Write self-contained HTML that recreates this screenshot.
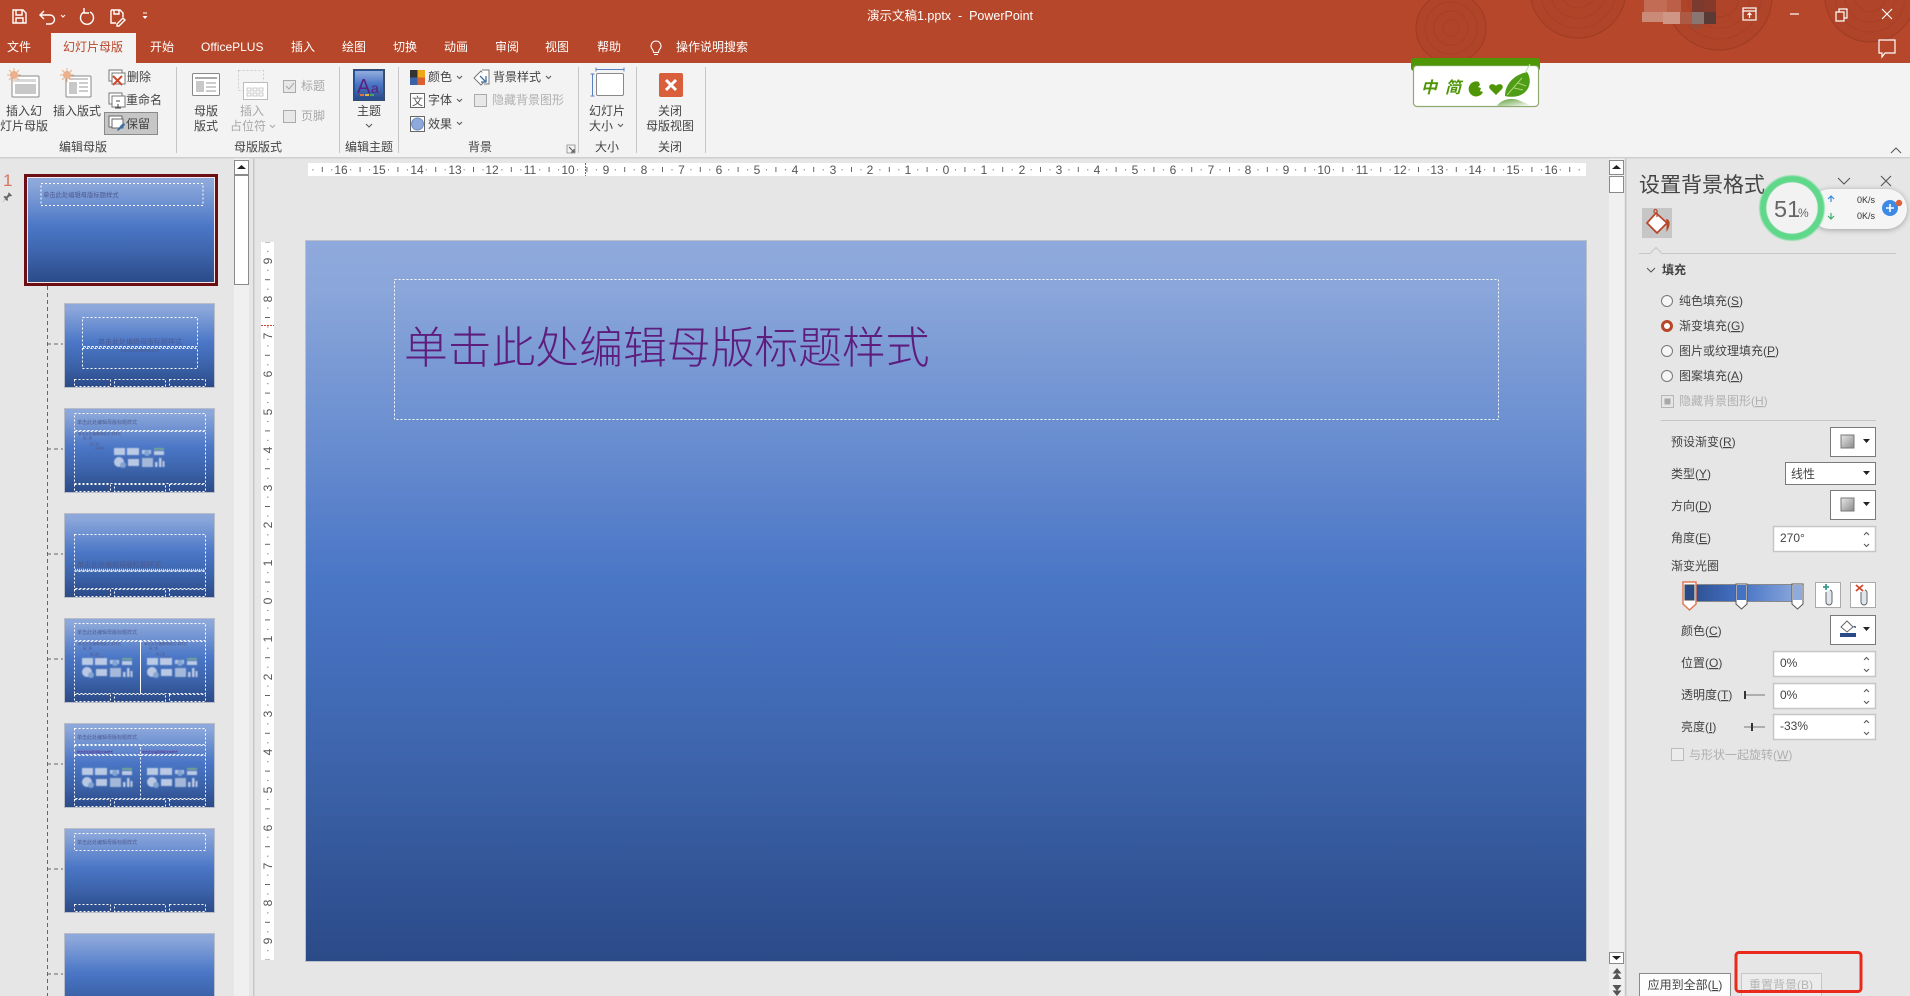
<!DOCTYPE html>
<html lang="zh-CN"><head><meta charset="utf-8"><title>演示文稿1.pptx - PowerPoint</title>
<style>
html,body{margin:0;padding:0;background:#e6e6e6;overflow:hidden;width:1910px;height:996px}
svg{display:block}
text{font-family:"Liberation Sans","Noto Sans CJK SC",sans-serif}
.r{font-size:12px;fill:#444}
.c{text-anchor:middle}
.g{fill:#a8a8a8}
.w{fill:#fff;font-size:12px}
.box{fill:none;stroke:#fff;stroke-width:1;stroke-dasharray:2 2;shape-rendering:crispEdges}
.btn{fill:#fff;stroke:#7a7a7a;stroke-width:1}
.inp{fill:#fff;stroke:#c6c6c6;stroke-width:1.5}
.ic{fill:none;stroke:#666;stroke-width:1}
.tt{font-size:5px;fill:#4d5a8e}
.chev{fill:none;stroke:#555;stroke-width:1}
.u{text-decoration:underline}
</style></head>
<body>
<svg width="1910" height="996" viewBox="0 0 1910 996" xmlns="http://www.w3.org/2000/svg">
<defs>
<linearGradient id="sg" x1="0" y1="0" x2="0" y2="1">
<stop offset="0" stop-color="#8fa9dc"/><stop offset=".07" stop-color="#8aa6da"/><stop offset=".47" stop-color="#4a76c6"/><stop offset=".7" stop-color="#3e66ae"/><stop offset="1" stop-color="#2b4a88"/>
</linearGradient>
<linearGradient id="bar" x1="0" y1="0" x2="1" y2="0">
<stop offset="0" stop-color="#2b4a88"/><stop offset=".48" stop-color="#4472c4"/><stop offset="1" stop-color="#8faadc"/>
</linearGradient>
<linearGradient id="sw" x1="0" y1="0" x2="1" y2="1">
<stop offset="0" stop-color="#e8e8e8"/><stop offset="1" stop-color="#8a8a8a"/>
</linearGradient>
<linearGradient id="rf" x1="0" y1="0" x2="1" y2="1">
<stop offset="0" stop-color="#3f8a10"/><stop offset="1" stop-color="#ffffff"/>
</linearGradient>
<filter id="bl" x="-10%" y="-10%" width="120%" height="120%"><feGaussianBlur stdDeviation=".45"/></filter>
<filter id="bl2" x="-10%" y="-10%" width="120%" height="120%"><feGaussianBlur stdDeviation=".8"/></filter>
<pattern id="hr" patternUnits="userSpaceOnUse" width="37.8" height="13" x="946" y="163">
<rect x="18.4" y="4" width="1" height="5" fill="#666"/><rect x="9" y="6" width="1" height="1.5" fill="#888"/><rect x="27.9" y="6" width="1" height="1.5" fill="#888"/>
</pattern>
<pattern id="vr" patternUnits="userSpaceOnUse" width="13" height="37.8" x="261" y="601">
<rect x="4" y="18.4" width="5" height="1" fill="#666"/><rect x="6" y="9" width="1.5" height="1" fill="#888"/><rect x="6" y="27.9" width="1.5" height="1" fill="#888"/>
</pattern>
<clipPath id="tb"><rect x="0" y="0" width="1910" height="63"/></clipPath>
<g id="ico" opacity=".85" filter="url(#bl)">
<rect x="0" y="0" width="11" height="7" fill="#d0daec"/><rect x="13" y="0" width="12" height="7" fill="#d0daec"/><rect x="28" y="2" width="9" height="4" fill="#d0daec"/><circle cx="33" cy="5" r="3" fill="#8fb0d8"/><rect x="40" y="0" width="10" height="2" fill="#7fb08a"/><rect x="40" y="3" width="10" height="4" fill="#d0daec"/>
<circle cx="5" cy="14" r="5" fill="#d0daec"/><circle cx="9" cy="17" r="3" fill="#8fb0d8"/><rect x="14" y="11" width="11" height="7" fill="#d0daec"/><rect x="28" y="10" width="11" height="9" fill="#b6c6e0"/><rect x="41" y="14" width="2.5" height="5" fill="#d0daec"/><rect x="45" y="10" width="2.5" height="9" fill="#d0daec"/><rect x="48.5" y="13" width="2" height="6" fill="#d0daec"/>
</g>
<g id="body">
<text class="tt" x="0" y="0" style="font-size:3.6px">单击此处编辑母版文本样式</text>
<text class="tt" x="5" y="4" style="font-size:3px">第二级</text>
<text class="tt" x="12" y="10" style="font-size:3px">第三级</text>
<text class="tt" x="17" y="14" style="font-size:3px">第四级</text>
</g>
<g id="foot">
<rect class="box" x="74.5" width="36" height="7"/><rect class="box" x="114.5" width="51" height="7"/><rect class="box" x="169.5" width="36" height="7"/>
</g>
</defs>

<!-- title + tab bar -->
<rect x="0" y="0" width="1910" height="63" fill="#b7472a"/>
<g clip-path="url(#tb)">
<g fill="#af4429" stroke="#a84027" stroke-width="1.2">
<circle cx="1451" cy="28" r="35" stroke="#a03d25"/><circle cx="1451" cy="28" r="26" fill="none"/><circle cx="1451" cy="28" r="17" fill="none"/><circle cx="1451" cy="28" r="8" fill="none"/>
<circle cx="1578" cy="-10" r="48" stroke="#a03d25"/><circle cx="1578" cy="-10" r="38" fill="none"/><circle cx="1578" cy="-10" r="28" fill="none"/><circle cx="1578" cy="-10" r="18" fill="none"/>
<circle cx="1719" cy="-3" r="53" stroke="#a03d25"/><circle cx="1719" cy="-3" r="42" fill="none"/><circle cx="1719" cy="-3" r="31" fill="none"/><circle cx="1719" cy="-3" r="20" fill="none"/>
<circle cx="1870" cy="-3" r="45" stroke="#a03d25"/><circle cx="1870" cy="-3" r="35" fill="none"/><circle cx="1870" cy="-3" r="25" fill="none"/><circle cx="1870" cy="-3" r="15" fill="none"/>
</g>
</g>
<!-- mosaic -->
<rect x="1644" y="0" width="23" height="12" fill="#c26b55"/><rect x="1667" y="0" width="14" height="12" fill="#bb5f49"/><rect x="1692" y="0" width="12" height="12" fill="#7a3a30"/><rect x="1704" y="0" width="12" height="12" fill="#84392a"/>
<rect x="1642" y="12" width="25" height="10" fill="#c98a78"/><rect x="1663" y="12" width="17" height="12" fill="#cf9585"/><rect x="1680" y="12" width="12" height="12" fill="#ad5a45"/><rect x="1692" y="12" width="12" height="12" fill="#8a7570"/><rect x="1704" y="12" width="12" height="12" fill="#5a3a35"/><rect x="1692" y="24" width="9" height="5" fill="#9a4a35"/>

<!-- quick access -->
<g fill="none" stroke="#fff" stroke-width="1.4">
<path d="M13 10h10l3 3v10H13z"/><path d="M16 10v5h6v-5M16 23v-5h7v5"/>
<path d="M41 15h9a4.5 4.5 0 0 1 0 9h-4M44 11l-4 4 4 4"/>
<path d="M61 15l2 2 2-2" stroke-width="1"/>
<path d="M90 12a6.500 6.500 0 1 1-6 0M84 8v5h5" />
<path d="M111 10h9l3 3v4M111 10v13h5"/><path d="M114 10v4h5v-4M117 24l6-6 2 2-6 6h-2z"/>
<path d="M143 13h4" stroke-width="1"/><path d="M142.500 16h5l-2.500 3z" fill="#fff" stroke="none"/>
</g>

<text x="950" y="20" class="w c" style="font-size:12.500px">演示文稿1.pptx&#160;&#160;-&#160;&#160;PowerPoint</text>

<!-- window controls -->
<g fill="none" stroke="#fff" stroke-width="1.200">
<rect x="1743" y="8" width="13" height="12"/><path d="M1743 11h13M1749.500 18v-5M1747.500 15l2-2 2 2"/>
<path d="M1790 14h9"/>
<path d="M1836 12h8v9h-8zM1839 12V9h8v9h-3"/>
<path d="M1882 9l10 10M1892 9l-10 10"/>
<path d="M1879 40h16v13h-10l-3 4v-4h-3z"/>
</g>

<!-- tabs -->
<rect x="0" y="63" width="1910" height="94" fill="#f3f3f3"/>
<rect x="51" y="33" width="85" height="30" fill="#f3f3f3"/>
<g class="w">
<text class="w" x="7" y="51">文件</text>
<text x="63" y="51" style="font-size:12px;fill:#b7472a">幻灯片母版</text>
<text class="w" x="150" y="51">开始</text>
<text class="w" x="201" y="51">OfficePLUS</text>
<text class="w" x="291" y="51">插入</text>
<text class="w" x="342" y="51">绘图</text>
<text class="w" x="393" y="51">切换</text>
<text class="w" x="444" y="51">动画</text>
<text class="w" x="495" y="51">审阅</text>
<text class="w" x="545" y="51">视图</text>
<text class="w" x="597" y="51">帮助</text>
<text class="w" x="676" y="51">操作说明搜索</text>
</g>
<path d="M656 41a5 5 0 0 1 3.500 8.500c-1 1-1 2-1 3h-5c0-1 0-2-1-3A5 5 0 0 1 656 41zM654 54.500h4" fill="none" stroke="#fff" stroke-width="1.100"/>

<!-- ribbon separators -->
<g fill="#c6c6c6"><rect x="176" y="67" width="1" height="86"/><rect x="339" y="67" width="1" height="86"/><rect x="398" y="67" width="1" height="86"/><rect x="578" y="67" width="1" height="86"/><rect x="636" y="67" width="1" height="86"/><rect x="705" y="67" width="1" height="86"/></g>
<rect x="0" y="157" width="1910" height="1.500" fill="#cfcfcf"/>

<!-- ribbon group 1 -->
<rect x="12" y="76" width="27" height="21" rx="1" fill="#fff" stroke="#888"/><rect x="15" y="84" width="21" height="10" fill="#c8c8c8"/><rect x="15" y="79" width="21" height="3" fill="#d8d8d8"/>
<circle cx="14" cy="75" r="4" fill="#eab18c"/><path d="M14 68v14M7 75h14M9 70l10 10M19 70l-10 10" stroke="#eab18c" stroke-width="1"/>
<rect x="66" y="76" width="25" height="21" rx="1" fill="#fff" stroke="#888"/><rect x="69" y="82" width="8" height="12" fill="#c8c8c8"/><path d="M79 83h9M79 87h9M79 91h9M69 79h19" stroke="#999"/>
<circle cx="67" cy="75" r="4" fill="#eab18c"/><path d="M67 68v14M60 75h14M62 70l10 10M72 70l-10 10" stroke="#eab18c" stroke-width="1"/>
<text class="r c" x="24" y="115">插入幻</text>
<text class="r" x="0" y="130">灯片母版</text>
<text class="r c" x="77" y="115">插入版式</text>
<rect x="109" y="70" width="13" height="11" fill="#fff" stroke="#777"/><rect x="112" y="73" width="13" height="11" fill="#fff" stroke="#777"/><path d="M113 76l9 9M122 76l-9 9" stroke="#d0492e" stroke-width="2"/>
<text class="r" x="127" y="81">删除</text>
<rect x="109" y="93" width="13" height="11" fill="#fff" stroke="#777"/><rect x="112" y="96" width="13" height="11" fill="#fff" stroke="#777"/><path d="M116 101h4M118 104v4M115 108h6" stroke="#444"/>
<text class="r" x="126" y="104">重命名</text>
<rect x="104.500" y="112.500" width="53" height="22" fill="#c6c6c6" stroke="#8a8a8a"/>
<rect x="109" y="116" width="13" height="11" fill="#fff" stroke="#666"/><rect x="112" y="119" width="11" height="9" fill="#fff" stroke="#666"/><path d="M117 130l4-5 3-2 1 2-2 2-5 4z" fill="#3d6ea5"/>
<text class="r" x="126" y="128">保留</text>
<text class="r c" x="83" y="151">编辑母版</text>

<!-- group 2 -->
<rect x="192.500" y="73.500" width="27" height="22" rx="1" fill="#fff" stroke="#888"/><path d="M195 78h22" stroke="#aaa" stroke-width="2"/><rect x="196" y="81" width="8" height="11" fill="#c8c8c8"/><path d="M206 83h10M206 87h10M206 91h10" stroke="#999"/>
<text class="r c" x="206" y="115">母版</text><text class="r c" x="206" y="130">版式</text>
<rect x="238.500" y="70.500" width="25" height="20" fill="none" stroke="#ccc" stroke-dasharray="2 2"/>
<rect x="243.500" y="82.500" width="24" height="17" fill="#fff" stroke="#bbb"/><path d="M247 88h4v3h-4zM253 88h4v3h-4zM259 88h4v3h-4zM247 93h4v3h-4zM253 93h4v3h-4zM259 93h4v3h-4z" fill="none" stroke="#bbb" stroke-width=".8"/>
<text class="r c g" x="252" y="115" style="fill:#a8a8a8">插入</text><text class="r c" x="248" y="130" style="fill:#a8a8a8">占位符</text>
<path d="M270 125l2.500 2.500 2.500-2.500" fill="none" stroke="#aaa"/>
<rect x="283.500" y="80.500" width="12" height="12" fill="#e8e8e8" stroke="#aaa"/><path d="M286 86l3 3 5-6" fill="none" stroke="#a8a8a8"/>
<text class="r" x="301" y="90" style="fill:#a8a8a8">标题</text>
<rect x="283.500" y="110.500" width="12" height="12" fill="#e8e8e8" stroke="#aaa"/>
<text class="r" x="301" y="120" style="fill:#a8a8a8">页脚</text>
<text class="r c" x="258" y="151">母版版式</text>

<!-- group 3 -->
<rect x="353.500" y="69.500" width="31" height="31" fill="#24549c" stroke="#3b4a66"/><rect x="355" y="71" width="28" height="28" fill="url(#sg)"/>
<text x="357" y="93" style="font-size:20px;fill:#5a1f7f;font-family:'Liberation Sans'">A</text><text x="371" y="93" style="font-size:14px;fill:#5a1f7f;font-family:'Liberation Sans'">a</text>
<rect x="360" y="94" width="4" height="2" fill="#e0733a"/><rect x="365" y="94" width="4" height="2" fill="#e3b23c"/><rect x="370" y="94" width="4" height="2" fill="#4aa06a"/>
<text class="r c" x="369" y="115">主题</text>
<path class="chev" d="M366 124l3 3 3-3"/>
<text class="r c" x="369" y="151">编辑主题</text>

<!-- group 4 -->
<rect x="410" y="70" width="7.500" height="7.500" fill="#333"/><rect x="417.500" y="70" width="7.500" height="7.500" fill="#f0a818"/><rect x="410" y="77.500" width="7.500" height="7.500" fill="#3a62a8"/><rect x="417.500" y="77.500" width="7.500" height="7.500" fill="#d9602f"/>
<text class="r" x="428" y="81">颜色</text><path class="chev" d="M457 76l2.500 2.500 2.500-2.500"/>
<rect x="410.500" y="93.500" width="14" height="14" fill="#fff" stroke="#666"/><text x="417.500" y="105" class="c" style="font-size:11px;fill:#555">文</text>
<text class="r" x="428" y="104">字体</text><path class="chev" d="M457 99l2.500 2.500 2.500-2.500"/>
<rect x="410.500" y="116.500" width="14" height="15" fill="#fff" stroke="#666"/><circle cx="417.500" cy="124" r="6" fill="#8ea9db" stroke="#6f8bbf"/>
<text class="r" x="428" y="128">效果</text><path class="chev" d="M457 122l2.500 2.500 2.500-2.500"/>
<path d="M474 78l7-7 7 7-7 7z" fill="#fff" stroke="#777"/><path d="M482 70h7v14h-5" fill="#fff" stroke="#777"/><path d="M480 76l6 6M486 76v6h-5" fill="none" stroke="#3d6ea5" stroke-width="1.300"/>
<text class="r" x="493" y="81">背景样式</text><path class="chev" d="M546 76l2.500 2.500 2.500-2.500"/>
<rect x="474.500" y="94.500" width="12" height="12" fill="#e8e8e8" stroke="#aaa"/>
<text class="r" x="492" y="104" style="fill:#b0b0b0">隐藏背景图形</text>
<text class="r c" x="480" y="151">背景</text>
<path d="M567 145h8v8h-8z" fill="none" stroke="#888" stroke-width=".8"/><path d="M569 147l5 5M574 149v3h-3" fill="none" stroke="#555"/>

<!-- group 5 -->
<rect x="596.500" y="73.500" width="27" height="22" rx="1.500" fill="#fff" stroke="#888"/>
<path d="M596 69.500h28M596 67.500v4M624 67.500v4M592.500 74v22M590.500 74h4M590.500 96h4" fill="none" stroke="#5a82c0"/>
<text class="r c" x="607" y="115">幻灯片</text><text class="r" x="589" y="130">大小</text><path class="chev" d="M618 124l2.500 2.500 2.500-2.500"/>
<text class="r c" x="607" y="151">大小</text>

<!-- group 6 -->
<rect x="659" y="73" width="24" height="24" rx="2" fill="#d95f3c"/><path d="M666 80l10 10M676 80l-10 10" stroke="#fff" stroke-width="3"/>
<text class="r c" x="670" y="115">关闭</text><text class="r c" x="670" y="130">母版视图</text>
<text class="r c" x="670" y="151">关闭</text>

<path d="M1891 153l5-5 5 5" fill="none" stroke="#555"/>

<!-- IME widget -->
<rect x="1411" y="58" width="129" height="13" rx="3" fill="#4e9606"/>
<rect x="1413.500" y="65.500" width="125" height="41" rx="3.500" fill="#fff" stroke="#8eaa72" stroke-width="1.200"/>
<rect x="1411" y="60" width="129" height="5.500" fill="#4e9606"/>
<text x="1421" y="93" style="font-size:16px;font-weight:700;font-style:italic;fill:#4e9606">中</text>
<text x="1445" y="93" style="font-size:16px;font-weight:700;font-style:italic;fill:#4e9606">简</text>
<path d="M1479 82a7.500 7.500 0 1 0 4 10l-3-1 1-3-3-1 2-2z" fill="#4e9606"/>
<path d="M1496 95l-6-6c-3-4 3-7 6-3 3-4 9-1 6 3z" fill="#4e9606"/>
<path d="M1505 96c0-11 8-21 22-24 6 9 2 21-9 24-5 1-9 1-13 0z" fill="#4f9c17"/><path d="M1507 95l15-17M1514 88l9 2M1518 83l8 3" stroke="#a9d870" stroke-width="1" fill="none"/><path d="M1525 73l5-9" stroke="#c0dfa0" stroke-width="1"/>
<path d="M1497 106c3-6 14-9 21-6 5 2 9 4 14 6z" fill="url(#rf)" opacity=".85"/>

<!-- left panel -->
<rect x="0" y="158.500" width="234" height="838" fill="#e6e6e6"/>
<text x="3" y="186" style="font-size:17px;fill:#d9735c">1</text>
<path d="M2 203l3.500-4-2-2 1-1 2 .5 2-2.500-.5-1 1-.5 3 3-1 1-1-.5-2.500 2 .5 2-1 1-2-2z" fill="#666"/>
<path d="M47.500 286V996" stroke="#666" stroke-dasharray="4 3" fill="none"/>
<g stroke="#666" stroke-dasharray="4 3"><path d="M47 344h16M47 449h16M47 554h16M47 659h16M47 764h16M47 869h16M47 974h16"/></g>

<!-- left scrollbar -->
<rect x="234" y="158.500" width="15" height="838" fill="#f0f0f0"/>
<rect x="234.500" y="160.500" width="14" height="14" fill="#fff" stroke="#8a8a8a"/><path d="M237 169l4.500-4 4.500 4z" fill="#222"/>
<rect x="234.500" y="175.500" width="14" height="109" fill="#fff" stroke="#8a8a8a"/>
<rect x="253" y="158.500" width="1.500" height="838" fill="#c6c6c6"/>

<!-- thumbs -->
<rect x="25.500" y="175.500" width="191" height="109" fill="none" stroke="#6b0f14" stroke-width="3"/>
<rect x="27.500" y="177.500" width="187" height="105" fill="url(#sg)" stroke="#f4e8e8"/>
<rect class="box" x="41" y="183.500" width="162" height="22"/>
<text x="43" y="197" class="tt" style="font-size:6.300px">单击此处编辑母版标题样式</text>

<rect x="64.500" y="303.500" width="150" height="84" fill="url(#sg)" stroke="#b9bdc8"/>
<rect class="box" x="82.500" y="317.500" width="115" height="29"/><rect class="box" x="82.500" y="348.500" width="115" height="20"/>
<text x="140" y="344" class="tt c" style="font-size:7px">单击此处编辑母版标题样式</text>
<path d="M83 347h114" stroke="#c8cdd9" stroke-width="2" stroke-dasharray="1 1"/>
<text x="140" y="351.500" class="tt c" style="font-size:3px">单击此处编辑母版副标题样式</text>
<use href="#foot" y="379.500"/>

<rect x="64.500" y="408.500" width="150" height="84" fill="url(#sg)" stroke="#b9bdc8"/>
<rect class="box" x="74.500" y="413.500" width="131" height="17"/><rect class="box" x="74.500" y="431.500" width="131" height="52"/>
<text x="77" y="424" class="tt">单击此处编辑母版标题样式</text>
<use href="#body" x="78" y="435"/>
<use href="#ico" x="114" y="448"/>
<use href="#foot" y="484.500"/>

<rect x="64.500" y="513.500" width="150" height="84" fill="url(#sg)" stroke="#b9bdc8"/>
<rect class="box" x="74.500" y="534.500" width="131" height="36"/><rect class="box" x="74.500" y="571.500" width="131" height="17"/>
<text x="77" y="567" class="tt" style="font-size:7px">单击此处编辑母版标题样式</text>
<path d="M75 570h130" stroke="#c8cdd9" stroke-width="2.500" stroke-dasharray="1 1"/>
<use href="#foot" y="589.500"/>

<rect x="64.500" y="618.500" width="150" height="84" fill="url(#sg)" stroke="#b9bdc8"/>
<rect class="box" x="74.500" y="623.500" width="131" height="17"/><rect class="box" x="74.500" y="641.500" width="66" height="52"/><rect class="box" x="140.500" y="641.500" width="65" height="52"/>
<text x="77" y="634" class="tt">单击此处编辑母版标题样式</text>
<use href="#body" x="78" y="645"/><use href="#body" x="144" y="645"/>
<use href="#ico" x="82" y="658"/><use href="#ico" x="147" y="658"/>
<use href="#foot" y="694.500"/>

<rect x="64.500" y="723.500" width="150" height="84" fill="url(#sg)" stroke="#b9bdc8"/>
<rect class="box" x="74.500" y="728.500" width="131" height="16"/><rect class="box" x="74.500" y="745.500" width="66" height="9"/><rect class="box" x="140.500" y="745.500" width="65" height="9"/><rect class="box" x="74.500" y="755.500" width="66" height="43"/><rect class="box" x="140.500" y="755.500" width="65" height="43"/>
<text x="77" y="739" class="tt">单击此处编辑母版标题样式</text>
<text x="77" y="753" class="tt" style="font-size:3px;fill:#5a1f7f">单击此处编辑母版文本样式</text><text x="142" y="753" class="tt" style="font-size:3px;fill:#5a1f7f">单击此处编辑母版文本样式</text>
<use href="#ico" x="82" y="768"/><use href="#ico" x="147" y="768"/>
<use href="#foot" y="799.500"/>

<rect x="64.500" y="828.500" width="150" height="84" fill="url(#sg)" stroke="#b9bdc8"/>
<rect class="box" x="74.500" y="833.500" width="131" height="17"/>
<text x="77" y="844" class="tt">单击此处编辑母版标题样式</text>
<use href="#foot" y="904.500"/>

<rect x="64.500" y="933.500" width="150" height="84" fill="url(#sg)" stroke="#b9bdc8"/>

<!-- rulers -->
<rect x="308" y="163" width="1278" height="13" fill="#fff"/><rect x="308" y="163" width="1278" height="13" fill="url(#hr)"/>
<g style="font-size:12px;fill:#555;text-anchor:middle">
<text x="341" y="174">16</text><text x="379" y="174">15</text><text x="417" y="174">14</text><text x="455" y="174">13</text><text x="492" y="174">12</text><text x="530" y="174">11</text><text x="568" y="174">10</text><text x="606" y="174">9</text><text x="644" y="174">8</text><text x="681.500" y="174">7</text><text x="719" y="174">6</text><text x="757" y="174">5</text><text x="795" y="174">4</text><text x="833" y="174">3</text><text x="870" y="174">2</text><text x="908" y="174">1</text><text x="946" y="174">0</text><text x="984" y="174">1</text><text x="1022" y="174">2</text><text x="1059" y="174">3</text><text x="1097" y="174">4</text><text x="1135" y="174">5</text><text x="1173" y="174">6</text><text x="1211" y="174">7</text><text x="1248" y="174">8</text><text x="1286" y="174">9</text><text x="1324" y="174">10</text><text x="1362" y="174">11</text><text x="1400" y="174">12</text><text x="1437" y="174">13</text><text x="1475" y="174">14</text><text x="1513" y="174">15</text><text x="1551" y="174">16</text>
</g>
<path d="M585.500 163v13" stroke="#c8452e" stroke-dasharray="2 1"/>

<rect x="261" y="242" width="13" height="718" fill="#fff"/><rect x="261" y="242" width="13" height="718" fill="url(#vr)"/>
<g style="font-size:12px;fill:#555;text-anchor:middle">
<text transform="translate(272 261) rotate(-90)">9</text><text transform="translate(272 299) rotate(-90)">8</text><text transform="translate(272 336) rotate(-90)">7</text><text transform="translate(272 374) rotate(-90)">6</text><text transform="translate(272 412) rotate(-90)">5</text><text transform="translate(272 450) rotate(-90)">4</text><text transform="translate(272 488) rotate(-90)">3</text><text transform="translate(272 525) rotate(-90)">2</text><text transform="translate(272 563) rotate(-90)">1</text><text transform="translate(272 601) rotate(-90)">0</text><text transform="translate(272 639) rotate(-90)">1</text><text transform="translate(272 677) rotate(-90)">2</text><text transform="translate(272 714) rotate(-90)">3</text><text transform="translate(272 752) rotate(-90)">4</text><text transform="translate(272 790) rotate(-90)">5</text><text transform="translate(272 828) rotate(-90)">6</text><text transform="translate(272 866) rotate(-90)">7</text><text transform="translate(272 903) rotate(-90)">8</text><text transform="translate(272 941) rotate(-90)">9</text>
</g>
<path d="M261 325.500h13" stroke="#c8452e" stroke-dasharray="2 1"/>

<!-- slide -->
<rect x="305.500" y="240.500" width="1281" height="721" fill="url(#sg)" stroke="#bcc0c8"/>
<rect class="box" x="394.500" y="279.500" width="1104" height="140"/>
<text x="404" y="363" style="font-size:43.800px;fill:#5e1c7d;font-weight:300">单击此处编辑母版标题样式</text>

<!-- right scrollbar -->
<rect x="1609" y="158.500" width="15" height="838" fill="#f0f0f0"/>
<rect x="1609.500" y="160.500" width="14" height="14" fill="#fff" stroke="#8a8a8a"/><path d="M1612 169l4.500-4 4.500 4z" fill="#222"/>
<rect x="1609.500" y="176.500" width="14" height="16" fill="#fff" stroke="#8a8a8a"/>
<rect x="1609.500" y="952.500" width="14" height="11" fill="#fff" stroke="#8a8a8a"/><path d="M1612 956h9l-4.500 4z" fill="#222"/>
<path d="M1617 968l4.500 5.500h-9zM1617 973l4.500 6h-9z" fill="#555"/><path d="M1617 996l4.500-5.500h-9zM1617 991l4.500-6h-9z" fill="#555"/>
<rect x="1625" y="158.500" width="1.500" height="838" fill="#c6c6c6"/>

<!-- right pane -->
<text x="1639" y="192" style="font-size:21px;fill:#444">设置背景格式</text>
<path d="M1838 178l6 6 6-6" fill="none" stroke="#555" stroke-width="1.100"/><path d="M1881 176l10 10M1891 176l-10 10" fill="none" stroke="#555" stroke-width="1.100"/>
<rect x="1642" y="208" width="30" height="30" fill="#c6c6c6"/>
<path d="M1647 223l9-10 11 10-10 10z" fill="#fff" stroke="#b7472a" stroke-width="1.800" stroke-linejoin="round"/><path d="M1654 213v-2a1.500 1.500 0 0 1 3 0v6" fill="none" stroke="#b7472a" stroke-width="1.200"/><path d="M1666 219c3 0 4 3 3.500 6-.3 2.500-2 5-3 7-.2-3 .5-8-.5-13z" fill="#b7472a"/>
<path d="M1639 253.500h11l6-6 6 6h234" fill="none" stroke="#c6c6c6"/>

<!-- net widget -->
<rect x="1810" y="189" width="97" height="40" rx="20" fill="#f5f5f5" style="filter:drop-shadow(0 1px 3px rgba(0,0,0,.3))"/>
<circle cx="1792" cy="208" r="29" fill="none" stroke="#5ed88a" stroke-width="7" filter="url(#bl2)"/>
<circle cx="1792" cy="208" r="25.500" fill="#f2f2f2"/>
<text x="1774" y="217" style="font-size:23.500px;fill:#666">51</text><text x="1798" y="217" style="font-size:12px;fill:#666">%</text>
<path d="M1831 202v-6M1828 199l3-3 3 3" fill="none" stroke="#3a8ae0" stroke-width="1.200"/>
<path d="M1831 213v6M1828 216l3 3 3-3" fill="none" stroke="#3aaf6a" stroke-width="1.200"/>
<text x="1857" y="203" style="font-size:9px;fill:#333">0K/s</text><text x="1857" y="219" style="font-size:9px;fill:#333">0K/s</text>
<circle cx="1890" cy="208" r="8" fill="#3d8ae6"/><path d="M1886 208h8M1890 204v8" stroke="#fff" stroke-width="1.600"/><circle cx="1899" cy="203" r="3.200" fill="#e0603a"/>

<path d="M1647 268l4 4 4-4" fill="none" stroke="#555"/>
<text x="1662" y="274" style="font-size:12px;font-weight:700;fill:#444">填充</text>

<circle cx="1667" cy="301" r="5.500" fill="#f6f6f6" stroke="#777"/><text class="r" x="1679" y="305">纯色填充(<tspan class="u">S</tspan>)</text>
<circle cx="1667" cy="326" r="4.500" fill="#fff" stroke="#b7472a" stroke-width="3"/><text class="r" x="1679" y="330">渐变填充(<tspan class="u">G</tspan>)</text>
<circle cx="1667" cy="351" r="5.500" fill="#f6f6f6" stroke="#777"/><text class="r" x="1679" y="355">图片或纹理填充(<tspan class="u">P</tspan>)</text>
<circle cx="1667" cy="376" r="5.500" fill="#f6f6f6" stroke="#777"/><text class="r" x="1679" y="380">图案填充(<tspan class="u">A</tspan>)</text>
<rect x="1661.500" y="395.500" width="12" height="12" fill="#e6e6e6" stroke="#b5b5b5"/><rect x="1664.500" y="398.500" width="6" height="6" fill="#a8a8a8"/>
<text class="r" x="1679" y="405" style="fill:#b0b0b0">隐藏背景图形(<tspan class="u">H</tspan>)</text>
<rect x="1661" y="420" width="215" height="1" fill="#c6c6c6"/>

<text class="r" x="1671" y="446">预设渐变(<tspan class="u">R</tspan>)</text>
<rect class="btn" x="1830.500" y="427.500" width="45" height="29"/><rect x="1841" y="435" width="13" height="13" fill="url(#sw)" stroke="#777"/><path d="M1863 439h7l-3.500 4z" fill="#222"/>

<text class="r" x="1671" y="478">类型(<tspan class="u">Y</tspan>)</text>
<rect class="btn" x="1785.500" y="462.500" width="90" height="22"/><text class="r" x="1791" y="478">线性</text><path d="M1863 471h7l-3.500 4z" fill="#222"/>

<text class="r" x="1671" y="510">方向(<tspan class="u">D</tspan>)</text>
<rect class="btn" x="1830.500" y="490.500" width="45" height="29"/><rect x="1841" y="498" width="13" height="13" fill="url(#sw)" stroke="#777"/><path d="M1863 502h7l-3.500 4z" fill="#222"/>

<text class="r" x="1671" y="542">角度(<tspan class="u">E</tspan>)</text>
<rect class="inp" x="1773.500" y="526.500" width="102" height="25"/><text class="r" x="1780" y="542">270°</text>
<path d="M1864 535l2.500-2.500 2.500 2.500M1864 544l2.500 2.500 2.500-2.500" fill="none" stroke="#555"/>

<text class="r" x="1671" y="570">渐变光圈</text>
<rect x="1684.500" y="584.500" width="115" height="17" fill="url(#bar)" stroke="#888"/>
<path d="M1683 582h13v22l-6.500 6-6.500-6z" fill="#fff" stroke="#e07a5a" stroke-width="1.500"/><rect x="1685" y="585" width="9" height="15" fill="#2b4a88" stroke="#444"/>
<path d="M1736 584h11v20l-5.500 5-5.500-5z" fill="#fff" stroke="#555"/><rect x="1737" y="585" width="9" height="15" fill="#4472c4"/>
<path d="M1792 584h11v20l-5.500 5-5.500-5z" fill="#fff" stroke="#555"/><rect x="1793" y="585" width="9" height="15" fill="#8faadc"/>
<rect class="btn" x="1815.500" y="582.500" width="25" height="25" style="stroke:#aaa"/><path d="M1826 592v10a3 3 0 0 0 6 0v-10a3 3 0 0 0-2-2" fill="#dfe6ee" stroke="#666"/><path d="M1823 587h6M1826 584v6" stroke="#3a9a8e" stroke-width="1.800"/>
<rect class="btn" x="1850.500" y="582.500" width="25" height="25" style="stroke:#aaa"/><path d="M1861 592v10a3 3 0 0 0 6 0v-10a3 3 0 0 0-2-2" fill="#dfe6ee" stroke="#666"/><path d="M1856 585l7 6M1863 585l-7 6" stroke="#d0492e" stroke-width="1.800"/>

<text class="r" x="1681" y="635">颜色(<tspan class="u">C</tspan>)</text>
<rect class="btn" x="1830.500" y="615.500" width="45" height="29"/>
<path d="M1841 627l6-6 6 6-6 5z" fill="#fff" stroke="#666"/><path d="M1853 627c2-2 3-1 3 1z" fill="#2b4a88"/><rect x="1840" y="633" width="16" height="4" fill="#2b4a88"/><path d="M1863 627h7l-3.500 4z" fill="#222"/>

<text class="r" x="1681" y="667">位置(<tspan class="u">O</tspan>)</text>
<rect class="inp" x="1773.500" y="651.500" width="102" height="25"/><text class="r" x="1780" y="667">0%</text>
<path d="M1864 660l2.500-2.500 2.500 2.500M1864 669l2.500 2.500 2.500-2.500" fill="none" stroke="#555"/>

<text class="r" x="1681" y="699">透明度(<tspan class="u">T</tspan>)</text>
<path d="M1745 691v8" stroke="#333" stroke-width="2"/><path d="M1746 695h19" stroke="#777"/>
<rect class="inp" x="1773.500" y="683.500" width="102" height="25"/><text class="r" x="1780" y="699">0%</text>
<path d="M1864 692l2.500-2.500 2.500 2.500M1864 701l2.500 2.500 2.500-2.500" fill="none" stroke="#555"/>

<text class="r" x="1681" y="731">亮度(<tspan class="u">I</tspan>)</text>
<path d="M1744 727h21" stroke="#777"/><path d="M1752 723v8" stroke="#333" stroke-width="2"/>
<rect class="inp" x="1773.500" y="714.500" width="102" height="25"/><text class="r" x="1780" y="730">-33%</text>
<path d="M1864 723l2.500-2.500 2.500 2.500M1864 732l2.500 2.500 2.500-2.500" fill="none" stroke="#555"/>

<rect x="1671.500" y="748.500" width="12" height="12" fill="#ececec" stroke="#bbb"/>
<text class="r" x="1689" y="759" style="fill:#b0b0b0">与形状一起旋转(<tspan class="u">W</tspan>)</text>

<!-- bottom buttons -->
<rect x="1639.500" y="973.500" width="91" height="30" fill="#fdfdfd" stroke="#8a8a8a"/>
<text class="r c" x="1685" y="989">应用到全部(<tspan class="u">L</tspan>)</text>
<rect x="1741.500" y="973.500" width="80" height="30" fill="#ececec" stroke="#c6c6c6"/>
<text class="r c" x="1781" y="989" style="fill:#b5b5b5">重置背景(B)</text>
<rect x="1736" y="952.500" width="125" height="39" rx="3" fill="none" stroke="#e8291c" stroke-width="3"/>
</svg>
</body></html>
